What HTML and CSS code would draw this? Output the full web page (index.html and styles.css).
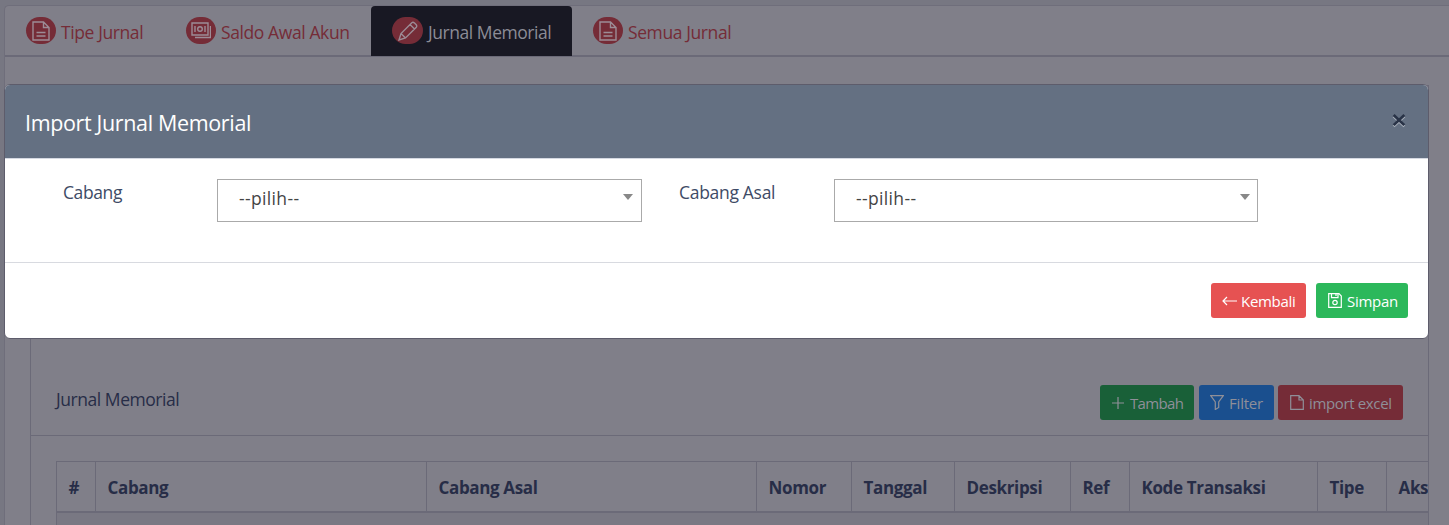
FILE: index.html
```html
<!DOCTYPE html>
<html lang="id">
<head>
<meta charset="utf-8">
<title>Import Jurnal Memorial</title>
<link rel="stylesheet" href="styles.css">
</head>
<body>
<svg width="0" height="0" class="defs">
  <symbol id="doc" viewBox="0 0 18 20"><path d="M1 1h10.500l5.500 5.500V19H1zM11.500 1v5.500H17M4.500 11.500h9M4.500 15h9"/></symbol>
  <symbol id="file" viewBox="0 0 14 15"><path d="M.7.700h8.300l4.300 4.300v9.300H.7zM9 .7V5h4.300"/></symbol>
</svg>
<main class="page">
  <nav class="tabs">
    <a class="tab tab-tipe"><span class="badge"><svg width="18" height="20"><use href="#doc"/></svg></span><span class="t1">Tipe Jurnal</span></a>
    <a class="tab tab-saldo"><span class="badge"><svg width="20" height="18" viewBox="0 0 20 18"><path d="M1 1h16v12H1zM4 15.500h15.500V4M4 4v6M14 4v6"/><circle cx="9" cy="7" r="2.300"/></svg></span><span class="t2">Saldo Awal Akun</span></a>
    <a class="tab tab-memorial active"><span class="badge"><svg width="20" height="20" viewBox="0 0 20 20"><path d="M1 19l2-6.500L13.800 1.700q1.200-1 2.700.3l1.500 1.500q1.300 1.500.3 2.700L7.500 17zM12 3.500L16.500 8M3 12.500L7.500 17"/></svg></span><span class="t3">Jurnal Memorial</span></a>
    <a class="tab tab-semua"><span class="badge"><svg width="18" height="20"><use href="#doc"/></svg></span><span class="t4">Semua Jurnal</span></a>
  </nav>
  <section class="card">
    <header class="card-head">
      <h2>Jurnal Memorial</h2>
      <div class="actions">
        <button class="btn add"><svg width="12" height="12" viewBox="0 0 12 12"><path d="M6 0v12M0 6h12"/></svg><span>Tambah</span></button>
        <button class="btn filter"><svg width="14" height="15" viewBox="0 0 14 15"><path d="M.7.700h12.600L8.700 7v5.500l-3.400 2V7z"/></svg><span>Filter</span></button>
        <button class="btn excel"><svg width="14" height="15"><use href="#file"/></svg><span>import excel</span></button>
      </div>
    </header>
    <div class="table-wrap">
      <table>
        <colgroup><col class="w39"><col class="w331"><col class="w330"><col class="w95"><col class="w103"><col class="w116"><col class="w59"><col class="w188"><col class="w69"><col class="w90"></colgroup>
        <thead><tr><th>#</th><th>Cabang</th><th>Cabang Asal</th><th>Nomor</th><th>Tanggal</th><th>Deskripsi</th><th>Ref</th><th>Kode Transaksi</th><th>Tipe</th><th>Aksi</th></tr></thead>
        <tbody><tr><td colspan="10"></td></tr></tbody>
      </table>
    </div>
  </section>
</main>
<div class="modal" role="dialog">
  <header class="modal-head">
    <h1>Import Jurnal Memorial</h1>
    <button class="close" aria-label="Close"><svg width="14" height="15" viewBox="0 0 13 14"><path class="shade" d="M1.500 3l10 9.500M11.500 3l-10 9.500"/><path class="cross" d="M1.500 1.800l10 9.500M11.500 1.800l-10 9.500"/></svg></button>
  </header>
  <div class="modal-body">
    <label class="l1">Cabang</label>
    <div class="select"><span>--pilih--</span><i></i></div>
    <label class="l2">Cabang Asal</label>
    <div class="select last"><span>--pilih--</span><i></i></div>
  </div>
  <footer class="modal-foot">
    <button class="btn back"><svg width="15" height="10" viewBox="0 0 15 10"><path d="M15 5H1M5 1L1 5l4 4"/></svg><span>Kembali</span></button>
    <button class="btn save"><svg width="14" height="15" viewBox="0 0 14 15"><path d="M.7.700h10.300l2.300 2.300v11.300H.7zM3.500.700v4h6.500v-4M8 1v2"/><circle cx="7" cy="9.500" r="2.200"/></svg><span>Simpan</span></button>
  </footer>
</div>
</body>
</html>
```
FILE: styles.css
```css
* { box-sizing: border-box; }
html { overflow: hidden; }
body { margin: 0; width: 1449px; height: 525px; overflow: hidden; background: #777782; font-family: "Open Sans", "Noto Sans", sans-serif; font-size: 17.5px; letter-spacing: -0.4px; color: #272d47; }
.defs { display: block; height: 0; }
svg { fill: none; stroke: currentColor; stroke-width: 1.4; flex: none; }
h1, h2 { margin: 0; font-weight: 400; }
.page { margin: 5px 0 0 4px; height: 520px; overflow: hidden; background: #807f89; border: 1px solid #6f6e7b; border-right: 0; border-bottom: 0; border-top-left-radius: 5px; }
.tabs { display: flex; height: 51px; border-bottom: 2px solid #6b6a78; }
.tab { display: flex; height: 50px; align-items: center; padding: 0 0 0 21px; color: #752c37; white-space: nowrap; gap: 5px; }
.tab-tipe { width: 160px; }
.tab-saldo { width: 206px; }
.tab-memorial { width: 201px; }
.tab-semua { width: 180px; }
.tab.active { background: #181823; color: #8c8c96; border-radius: 4px 4px 0 0; letter-spacing: -0.45px; }
.badge { display: flex; align-items: center; justify-content: center; width: 30px; height: 27px; border-radius: 14px; background: #752c37; color: #9c8c96; margin-top: -1px; }
.active .badge { width: 31px; }
.tab > span:last-child { padding-top: 2px; }
.card { width: 1399px; height: 441px; margin: 28px 0 0 25px; border: 1px solid #6b6a78; border-bottom: 0; overflow: hidden; }
.card-head { display: flex; justify-content: space-between; align-items: flex-end; height: 350px; padding: 0 25px 15px; border-bottom: 1px solid #6b6a78; }
.card-head h2 { font-size: 17.5px; line-height: 24px; padding-bottom: 9px; letter-spacing: -0.45px; }
.actions { display: flex; }
.btn { display: flex; align-items: center; height: 35px; padding: 0 0 0 12px; border: 0; border-radius: 3px; font: 15px "Open Sans", "Noto Sans", sans-serif; letter-spacing: -0.3px; color: #8f8f98; gap: 5px; white-space: nowrap; }
.btn svg { stroke-width: 1.2; }
.btn span { padding-top: 1px; }
.add { width: 94px; background: #196038; margin-right: 5px; gap: 6px; letter-spacing: -0.65px; }
.filter { width: 75px; background: #1a4f8e; margin-right: 4px; padding-left: 11px; letter-spacing: -0.2px; }
.excel { width: 125px; background: #752c37; letter-spacing: -0.35px; }
.table-wrap { padding: 25px 0 0 25px; overflow: hidden; }
table { width: 1420px; table-layout: fixed; border-collapse: collapse; }
th { height: 50px; padding: 3px 0 0 11.5px; border: 1px solid #6b6a78; border-bottom-width: 2px; text-align: left; font-weight: 700; font-size: 17px; letter-spacing: -0.35px; white-space: nowrap; }
td { height: 50px; background: #797883; border: 1px solid #6b6a78; }
.w39 { width: 39px; } .w331 { width: 331px; } .w330 { width: 330px; } .w95 { width: 95px; } .w103 { width: 103px; } .w116 { width: 116px; } .w59 { width: 59px; } .w188 { width: 188px; } .w69 { width: 69px; } .w90 { width: 90px; }
.modal { position: absolute; left: 4px; top: 84px; width: 1425px; height: 255px; border: 1px solid #5d5c6b; border-radius: 6px; background: #fff; overflow: hidden; }
.modal-head { display: flex; justify-content: space-between; align-items: center; height: 74px; padding: 0 22px 0 20px; background: #647082; border-bottom: 1px solid #d5d9e2; color: #fff; }
.modal-head h1 { font-size: 21.5px; letter-spacing: -0.35px; padding-top: 1px; }
.close { display: flex; padding: 0; border: 0; background: none; margin-top: -2px; }
.close svg { stroke-width: 2.5; }
.shade { stroke: #a9b0bb; }
.cross { stroke: #293347; }
.modal-body { display: flex; height: 104px; padding: 20px 0 0 58px; border-bottom: 1px solid #d8dae0; }
.modal-body label { width: 154px; padding-top: 1px; line-height: 24px; color: #3e4b66; }
.select { display: flex; justify-content: space-between; width: 425px; height: 43px; padding: 6px 8px 0 21px; border: 1px solid #aaa; color: #444; line-height: 24px; letter-spacing: 0.35px; }
.select.last { width: 424px; padding-right: 7px; }
.select + label { margin-left: 37px; width: 155px; letter-spacing: -0.3px; }
.select i { width: 0; height: 0; margin-top: 8px; border: 5px solid transparent; border-top: 6px solid #888; border-bottom: 0; }
.modal-foot { display: flex; justify-content: flex-end; gap: 10px; padding: 20px 20px 0 0; }
.modal-foot .btn { color: #fff; }
.modal-foot .back { width: 95px; background: #e65252; padding-left: 11px; gap: 4px; }
.save { width: 92px; background: #2cb85b; }
```
